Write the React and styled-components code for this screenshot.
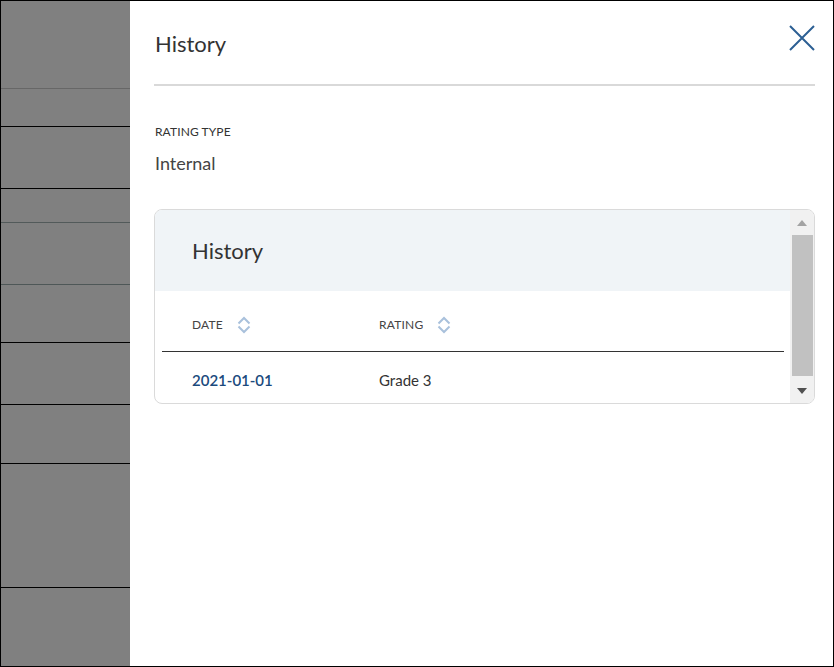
import React from "react";
import styled, { createGlobalStyle } from "styled-components";

const Global = createGlobalStyle`
  html, body { margin: 0; padding: 0; background: #fff; }
  * { box-sizing: border-box; }
  body { font-family: Lato, "Liberation Sans", sans-serif; }
`;

const Frame = styled.div`
  width: 834px;
  height: 667px;
  border: 1px solid #000;
  display: flex;
  overflow: hidden;
`;

const Backdrop = styled.div`
  width: 129px;
  flex: 0 0 129px;
  background: #808080;
  display: flex;
  flex-direction: column;
`;

const BackRow = styled.div`
  flex: 0 0 ${(p) => p.$h}px;
  border-bottom: 1px solid ${(p) => p.$line || "#000"};
  &:last-child { flex: 1; border-bottom: none; }
`;

const Panel = styled.div`
  flex: 1;
  background: #fff;
  padding: 0 18px 0 24px;
  display: flex;
  flex-direction: column;
`;

const Header = styled.div`
  height: 85px;
  border-bottom: 2px solid #d9d9d9;
  display: flex;
  align-items: center;
  justify-content: space-between;
  padding: 0 0 0 1px;
`;

const Title = styled.h1`
  margin: 2px 0 0 0;
  font-size: 22px;
  font-weight: 400;
  color: #333;
  line-height: 28px;
`;

const CloseBtn = styled.button`
  border: none;
  background: none;
  padding: 0;
  width: 26px;
  height: 26px;
  margin: 0 0 10px 0;
  display: flex;
  cursor: pointer;
`;

const Field = styled.div`
  margin-top: 38px;
  padding-left: 1px;
  display: flex;
  flex-direction: column;
`;

const Label = styled.div`
  font-size: 12px;
  line-height: 16px;
  color: #333;
  text-transform: uppercase;
  letter-spacing: 0.1px;
`;

const Value = styled.div`
  margin-top: 11px;
  font-size: 18px;
  line-height: 24px;
  color: #444;
`;

const Card = styled.div`
  margin-top: 34px;
  height: 195px;
  border: 1px solid #dadada;
  border-radius: 8px;
  overflow: hidden;
  display: flex;
`;

const CardBody = styled.div`
  flex: 1;
  display: flex;
  flex-direction: column;
`;

const CardHead = styled.div`
  height: 81px;
  background: #f0f4f7;
  padding-left: 37px;
  display: flex;
  align-items: center;
`;

const CardTitle = styled.h2`
  margin: 0;
  font-size: 22px;
  font-weight: 400;
  color: #333;
  line-height: 28px;
`;

const Table = styled.div`
  margin: 0 6px 0 7px;
  display: grid;
  grid-template-columns: 187px 1fr;
`;

const HeadCell = styled.div`
  height: 61px;
  padding: 25px 0 0 30px;
  border-bottom: 1px solid #333;
  display: flex;
  align-items: flex-start;
  font-size: 12px;
  line-height: 18px;
  color: #444;
  text-transform: uppercase;
  letter-spacing: 0.2px;
`;

const SortIcon = styled.svg`
  margin-left: 14px;
  flex: none;
`;

const Cell = styled.div`
  padding: 18px 0 0 30px;
  font-size: 15px;
  line-height: 20px;
  color: ${(p) => (p.$link ? "#1b4a7d" : "#333")};
  font-weight: ${(p) => (p.$link ? 600 : 400)};
`;

const Scrollbar = styled.div`
  width: 24px;
  flex: 0 0 24px;
  background: #f1f1f1;
  display: flex;
  flex-direction: column;
  align-items: stretch;
  padding-left: 1px;
  padding-right: 1px;
`;

const ScrollBtn = styled.div`
  height: 25px;
  display: flex;
  align-items: center;
  justify-content: center;
`;

const Thumb = styled.div`
  flex: 0 0 141px;
  background: #c1c1c1;
  margin-left: 1px;
`;

const Spacer = styled.div`
  flex: 1;
`;

const rows = [
  { h: 88, line: "#676767" },
  { h: 38 },
  { h: 62 },
  { h: 34, line: "#525a5a" },
  { h: 62, line: "#4e5757" },
  { h: 58 },
  { h: 62 },
  { h: 59 },
  { h: 124 },
  { h: 80 },
];

function Sort() {
  return (
    <SortIcon width="14" height="18" viewBox="0 0 14 18" fill="none">
      <path d="M1.5 7.5 L7 2 L12.5 7.5" stroke="#a9c1dc" strokeWidth="2" />
      <path d="M1.5 10.5 L7 16 L12.5 10.5" stroke="#a9c1dc" strokeWidth="2" />
    </SortIcon>
  );
}

export default function App() {
  return (
    <>
      <Global />
      <Frame>
        <Backdrop>
          {rows.map((r, i) => (
            <BackRow key={i} $h={r.h} $line={r.line} />
          ))}
        </Backdrop>
        <Panel>
          <Header>
            <Title>History</Title>
            <CloseBtn aria-label="Close">
              <svg width="26" height="26" viewBox="0 0 26 26">
                <path d="M1 1 L25 25 M25 1 L1 25" stroke="#2c5f93" strokeWidth="2" />
              </svg>
            </CloseBtn>
          </Header>
          <Field>
            <Label>Rating Type</Label>
            <Value>Internal</Value>
          </Field>
          <Card>
            <CardBody>
              <CardHead>
                <CardTitle>History</CardTitle>
              </CardHead>
              <Table>
                <HeadCell>
                  Date
                  <Sort />
                </HeadCell>
                <HeadCell>
                  Rating
                  <Sort />
                </HeadCell>
                <Cell $link>2021-01-01</Cell>
                <Cell>Grade 3</Cell>
              </Table>
            </CardBody>
            <Scrollbar>
              <ScrollBtn>
                <svg width="10" height="6" viewBox="0 0 10 6">
                  <path d="M0 6 L5 0 L10 6 Z" fill="#a3a3a3" />
                </svg>
              </ScrollBtn>
              <Thumb />
              <Spacer />
              <ScrollBtn>
                <svg width="10" height="6" viewBox="0 0 10 6">
                  <path d="M0 0 L10 0 L5 6 Z" fill="#505050" />
                </svg>
              </ScrollBtn>
            </Scrollbar>
          </Card>
        </Panel>
      </Frame>
    </>
  );
}
